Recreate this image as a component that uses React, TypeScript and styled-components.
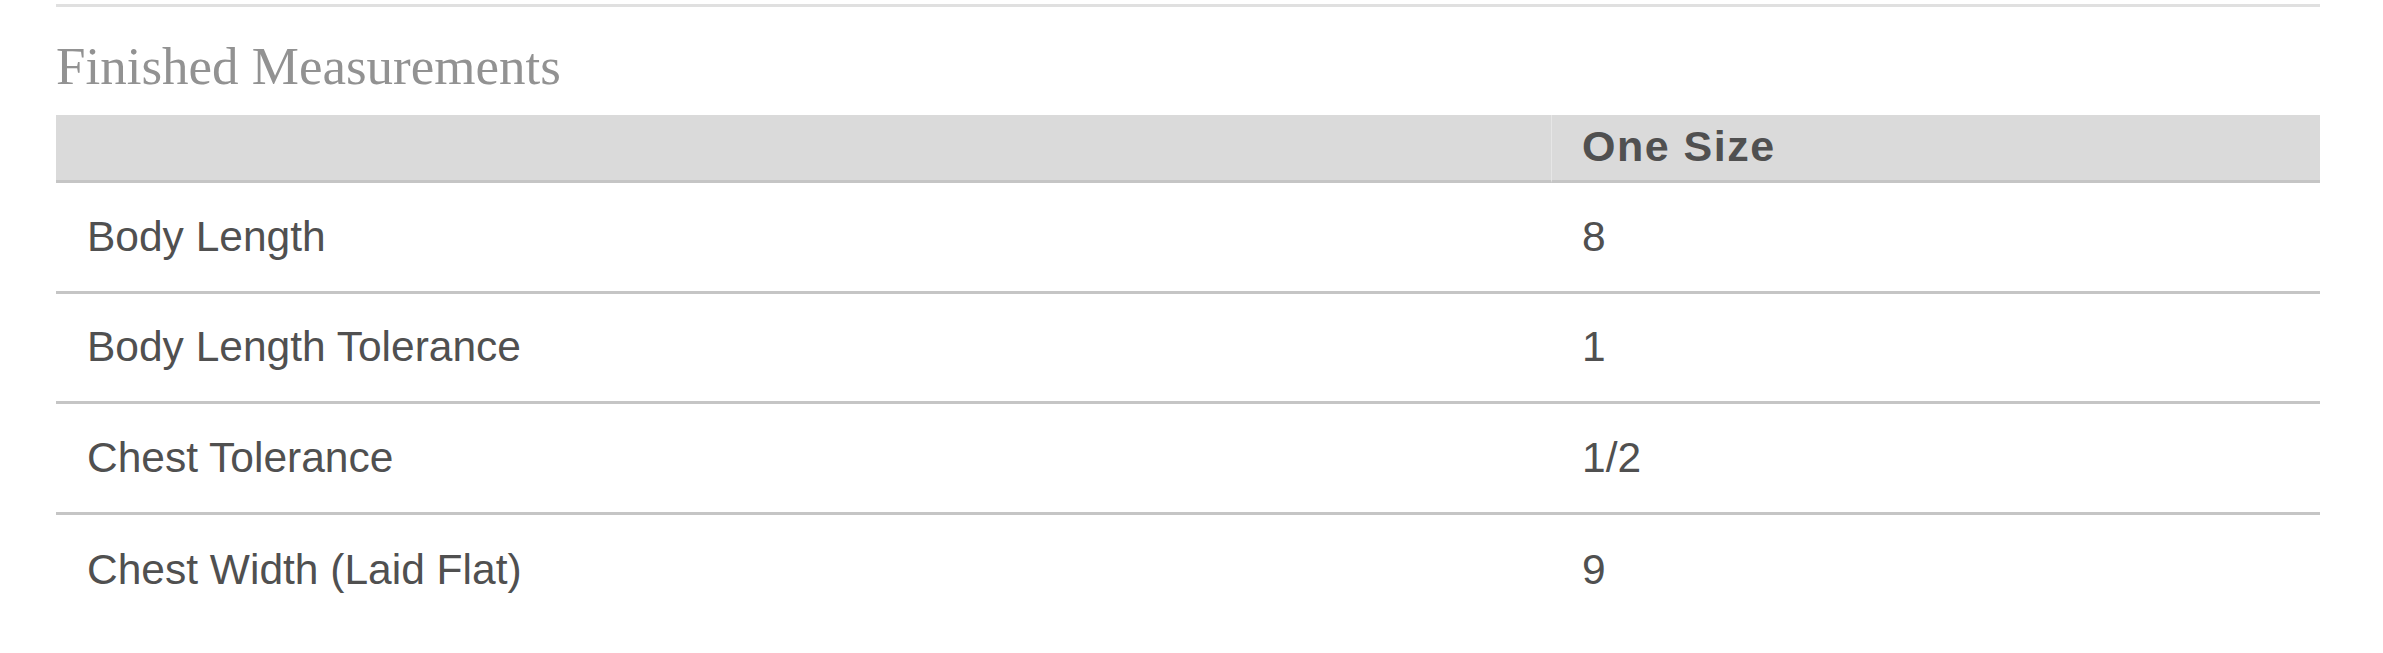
import React from 'react';
import styled, { createGlobalStyle } from 'styled-components';

const rows: [string, string][] = [
  ['Body Length', '8'],
  ['Body Length Tolerance', '1'],
  ['Chest Tolerance', '1/2'],
  ['Chest Width (Laid Flat)', '9'],
];

export default () => (
  <>
    <GlobalStyle />
    <Page>
      <Section>
        <Title>Finished Measurements</Title>
        <Table>
          <HeadRow>
            <HeadCell />
            <HeadCell divider>One Size</HeadCell>
          </HeadRow>
          {rows.map(([label, value], i) => (
            <Row key={label} last={i === rows.length - 1}>
              <Cell>{label}</Cell>
              <Cell>{value}</Cell>
            </Row>
          ))}
        </Table>
      </Section>
    </Page>
  </>
);

const GlobalStyle = createGlobalStyle`
  body {
    margin: 0;
    background: #fff;
    font-family: 'Liberation Sans', Arial, sans-serif;
  }
`;

const Page = styled.div`
  padding: 4px 63px 0 56px;
`;

const Section = styled.section`
  border-top: 3px solid #e0e0e0;
`;

const Title = styled.h2`
  margin: 29px 0 19px;
  font-family: 'Liberation Serif', 'Times New Roman', serif;
  font-weight: normal;
  font-size: 53px;
  line-height: normal;
  color: #929292;
`;

const Table = styled.div`
  display: grid;
  grid-template-columns: 1495px 1fr;
  color: #505050;
  font-size: 42.5px;
`;

const HeadRow = styled.div`
  display: contents;
`;

const HeadCell = styled.div<{ divider?: boolean }>`
  height: 68px;
  box-sizing: border-box;
  display: flex;
  align-items: center;
  padding: 0 0 3px ${(p) => (p.divider ? '30px' : '31px')};
  background: #dadada;
  border-bottom: 3px solid #c5c5c5;
  border-left: ${(p) => (p.divider ? '1px solid #e6e6e6' : 'none')};
  font-weight: bold;
  font-size: 43px;
  letter-spacing: 1.5px;
  line-height: normal;
`;

const Row = styled.div<{ last?: boolean }>`
  display: contents;
  & > div {
    border-bottom: ${(p) => (p.last ? 'none' : '3px solid #c5c5c5')};
  }
`;

const Cell = styled.div`
  height: 110.5px;
  box-sizing: border-box;
  display: flex;
  align-items: center;
  padding-left: 31px;
  line-height: normal;
`;
